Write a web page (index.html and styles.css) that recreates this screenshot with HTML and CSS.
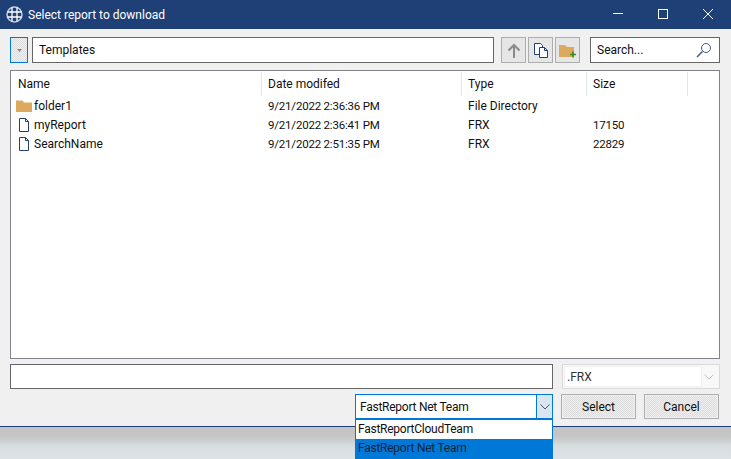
FILE: index.html
```html
<!DOCTYPE html>
<html lang="en">
<head>
<meta charset="utf-8">
<title>Select report to download</title>
<link rel="stylesheet" href="styles.css">
</head>
<body>
<div class="window">
  <header class="titlebar">
    <svg class="globe" width="17" height="17" viewBox="0 0 17 17" fill="none" stroke="#fff" stroke-width="1.300">
      <circle cx="8.500" cy="8.500" r="7.500" stroke="#c6ccd8" stroke-width="1.500"/>
      <path d="M6 1.500v14M11 1.500v14M1.500 6h14M1.500 11h14"/>
    </svg>
    <span class="title">Select report to download</span>
    <div class="controls">
      <svg width="10" height="1" viewBox="0 0 10 1"><path d="M0 .5h10" stroke="#fff"/></svg>
      <svg width="10" height="10" viewBox="0 0 10 10" fill="none"><rect x=".5" y=".5" width="9" height="9" stroke="#fff"/></svg>
      <svg width="10" height="10" viewBox="0 0 10 10" fill="none"><path d="M0 0l10 10M10 0L0 10" stroke="#fff"/></svg>
    </div>
  </header>
  <main class="content">
    <div class="toolbar">
      <button class="drop-btn"><svg width="5" height="3" viewBox="0 0 5 3"><path d="M0 0h5L2.500 3z" fill="#888"/></svg></button>
      <div class="field path">Templates</div>
      <div class="tools">
        <button class="tool"><svg width="14" height="15" viewBox="0 0 14 15" fill="none" stroke="#8a8a8a" stroke-width="2"><path d="M7 15V2M1.500 7.500L7 2l5.500 5.500"/></svg></button>
        <button class="tool"><svg width="14" height="15" viewBox="0 0 14 15" fill="#fff" stroke="#1f3f77"><path d="M.5.500h6l2 2v9h-8z"/><path d="M5.500 4.500h5l3 3v7h-8z"/><path d="M10.500 4.500v3h3" fill="none"/></svg></button>
        <button class="tool"><svg width="18" height="15" viewBox="0 0 18 15"><path d="M0 2h6l2 2h7v10H0z" fill="#dcaa5e"/><path d="M11 11.500h6M14 8.500v6" stroke="#3c8a1e" stroke-width="1.600"/></svg></button>
      </div>
      <div class="field search">
        <span>Search...</span>
        <svg width="16" height="16" viewBox="0 0 16 16" fill="none" stroke="#3d5a80"><circle cx="10" cy="6" r="4.500"/><path d="M6.500 9.500L1 15" stroke-width="1.500"/></svg>
      </div>
    </div>
    <section class="list">
      <div class="row head">
        <div class="cell">Name</div>
        <div class="cell">Date modifed</div>
        <div class="cell">Type</div>
        <div class="cell">Size</div>
        <div class="cell"></div>
      </div>
      <div class="row item">
        <div class="cell name"><svg class="ic" width="16" height="12" viewBox="0 0 16 12"><path d="M0 .500h6.500l1.500 2h8v9.500H0z" fill="#dcaa5e"/></svg>folder1</div>
        <div class="cell num">9/21/2022 2:36:36 PM</div>
        <div class="cell">File Directory</div>
        <div class="cell"></div>
      </div>
      <div class="row item">
        <div class="cell name"><svg class="ic" width="16" height="14" viewBox="0 0 16 14" fill="#fff" stroke="#1f3f77"><path d="M3.500.500h6l3 3v10h-9z"/><path d="M9.500.500v3h3" fill="none"/></svg>myReport</div>
        <div class="cell num">9/21/2022 2:36:41 PM</div>
        <div class="cell">FRX</div>
        <div class="cell num">17150</div>
      </div>
      <div class="row item">
        <div class="cell name"><svg class="ic" width="16" height="14" viewBox="0 0 16 14" fill="#fff" stroke="#1f3f77"><path d="M3.500.500h6l3 3v10h-9z"/><path d="M9.500.500v3h3" fill="none"/></svg>SearchName</div>
        <div class="cell num">9/21/2022 2:51:35 PM</div>
        <div class="cell">FRX</div>
        <div class="cell num">22829</div>
      </div>
    </section>
    <div class="file-row">
      <div class="field filename"></div>
      <div class="filter">
        <span class="filter-text">.FRX</span>
        <svg width="10" height="6" viewBox="0 0 10 6" fill="none" stroke="#c4c4c4"><path d="M.5.500L5 5 9.500.500"/></svg>
      </div>
    </div>
    <div class="action-row">
      <div class="combo">
        <span class="combo-text">FastReport Net Team</span>
        <span class="combo-arrow"><svg width="10" height="6" viewBox="0 0 10 6" fill="none" stroke="#555"><path d="M.5.500L5 5 9.500.500"/></svg></span>
      </div>
      <button class="btn">Select</button>
      <button class="btn">Cancel</button>
    </div>
  </main>
  <ul class="menu">
    <li>FastReportCloudTeam</li>
    <li class="selected">FastReport Net Team</li>
  </ul>
</div>
</body>
</html>
```
FILE: styles.css
```css
* { box-sizing: border-box; }
html, body { margin: 0; height: 100%; }
body {
  width: 731px;
  height: 459px;
  overflow: hidden;
  background: linear-gradient(#c4c4c4 0, #c4c4c4 436px, #d6dcdf 446px, #dde3e6 459px);
  font: 12px Roboto, "Noto Sans", sans-serif;
  color: #101010;
}
.window { position: relative; width: 731px; height: 459px; }
.titlebar {
  height: 29px;
  background: #1f3f77;
  color: #fff;
  display: flex;
  align-items: center;
  padding-left: 6px;
}
.globe { margin-right: 5px; }
.title { flex: 1; }
.controls { display: flex; align-items: center; gap: 35px; padding: 0 18px 2px 0; }
.content {
  height: 398px;
  background: #f0f0f0;
  border-bottom: 1px solid #1f3f77;
  padding: 8px 11px 0 10px;
}
button { font: inherit; color: inherit; padding: 0; }
.toolbar { display: flex; height: 26px; }
.drop-btn {
  width: 18px;
  border: 1px solid #0078d7;
  background: repeating-conic-gradient(#dcdcdc 0 25%, #f0f0f0 0 50%) 0 0 / 2px 2px;
  margin-right: 4px;
  display: flex;
  align-items: center;
  justify-content: center;
}
.field {
  background: #fff;
  border: 1px solid #666;
  display: flex;
  align-items: center;
}
.path { width: 462px; padding-left: 6px; }
.tools { display: flex; gap: 2px; margin-left: 7px; }
.tool {
  width: 25px;
  border: 1px solid #adadad;
  background: #e6e6e6;
  display: flex;
  align-items: center;
  justify-content: center;
}
.search {
  width: 130px;
  margin-left: 10px;
  padding: 0 7px 0 6px;
  justify-content: space-between;
}
.list {
  height: 289px;
  margin-top: 7px;
  background: #fff;
  border: 1px solid #82828c;
}
.row { display: grid; grid-template-columns: 251px 200px 125px 101px 31px; }
.head { height: 25px; align-items: end; }
.head .cell { height: 24px; display: flex; align-items: center; padding-left: 6px; border-right: 1px solid #dfe6ec; }
.head .cell:first-child { padding-left: 7px; }
.head .cell:last-child { border-right: 0; }
.item { height: 19px; align-items: center; }
.item .cell { padding-left: 6px; white-space: nowrap; }
.item .num { font-size: 11.5px; letter-spacing: -0.2px; }
.item .name { padding-left: 5px; display: flex; align-items: center; gap: 2px; }
.file-row { display: flex; height: 25px; margin-top: 5px; }
.filename { width: 543px; }
.filter {
  width: 158px;
  margin-left: 9px;
  border: 1px solid #d9d9d9;
  background: #f8f8f8;
  display: flex;
  align-items: center;
  justify-content: space-between;
  padding: 1px 5px 1px 1px;
  color: #333;
}
.filter-text { width: 138px; height: 100%; background: #fff; border: 1px solid #f0f0f0; display: flex; align-items: center; padding-left: 2px; }
.action-row { display: flex; height: 25px; margin-top: 5px; padding-left: 345px; }
.combo {
  width: 198px;
  background: #fff;
  border: 1px solid #0078d7;
  display: flex;
  align-items: center;
  justify-content: space-between;
  letter-spacing: -0.25px;
}
.combo-text { padding-left: 4px; }
.combo-arrow {
  width: 16px;
  height: 100%;
  background: #d8e6f2;
  border-left: 1px solid #0078d7;
  display: flex;
  align-items: center;
  justify-content: center;
}
.btn {
  width: 75px;
  margin-left: 8px;
  border: 1px solid #adadad;
  background: repeating-conic-gradient(#dcdcdc 0 25%, #efefef 0 50%) 0 0 / 2px 2px;
  box-shadow: inset 0 0 0 1px #f0f0f0;
}
.menu {
  position: absolute;
  left: 355px;
  top: 419px;
  width: 198px;
  height: 40px;
  margin: 0;
  padding: 0;
  list-style: none;
  background: #fff;
  border: 1px solid #0078d7;
  border-bottom: 0;
  letter-spacing: -0.25px;
}
.menu li { height: 19px; line-height: 18px; padding-left: 2px; }
.menu .selected { height: 20px; background: #0078d7; color: #14243c; }
```
